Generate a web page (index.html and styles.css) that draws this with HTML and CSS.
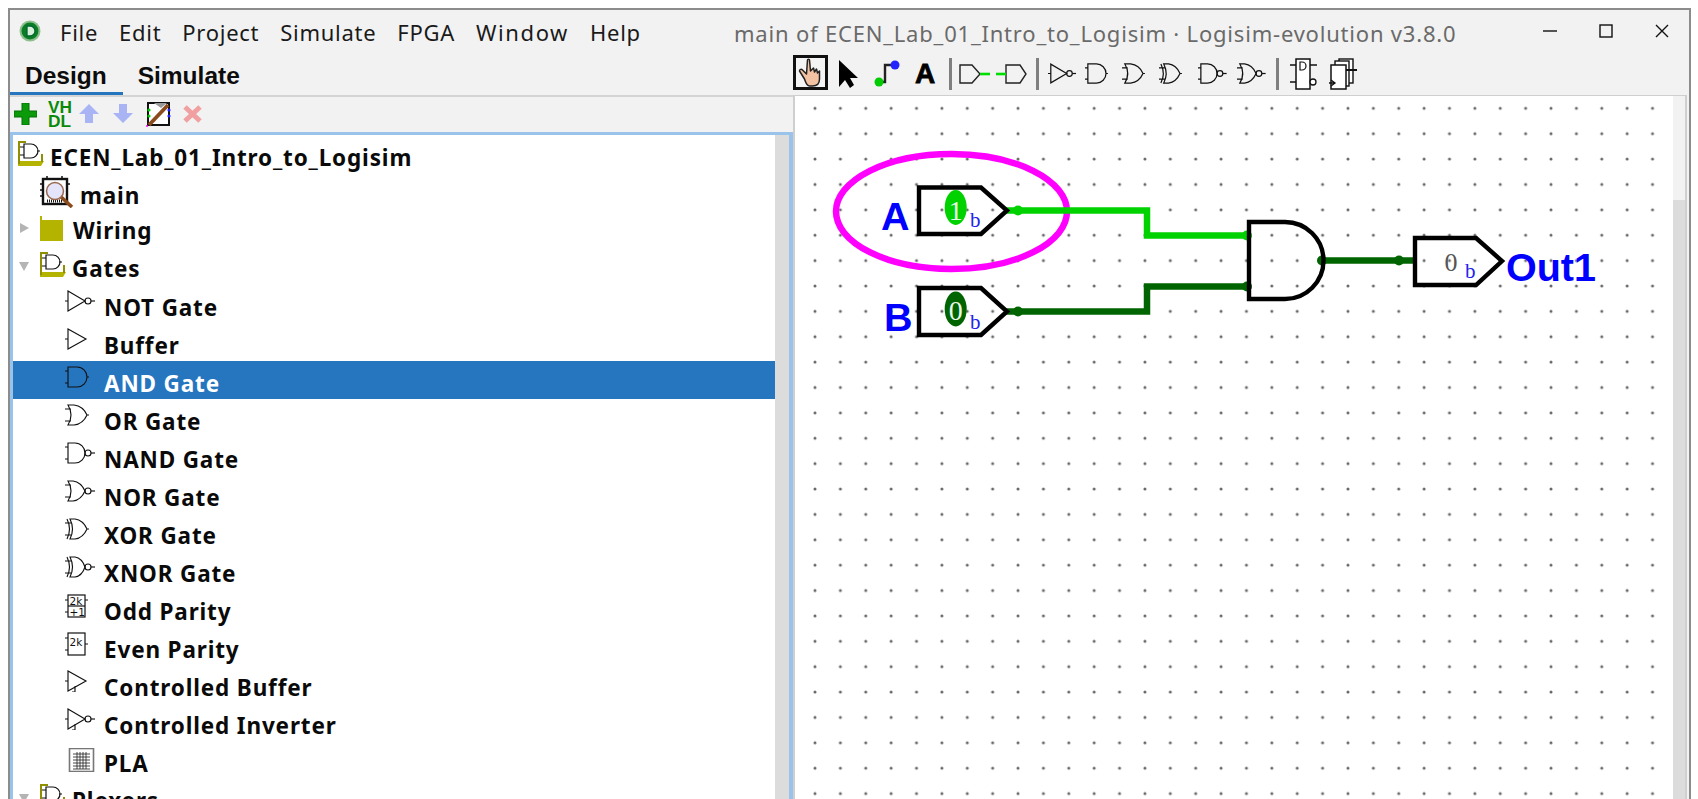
FILE: index.html
```html
<!DOCTYPE html>
<html lang="en">
<head>
<meta charset="utf-8">
<title>main of ECEN_Lab_01_Intro_to_Logisim · Logisim-evolution v3.8.0</title>
<link rel="stylesheet" href="styles.css">
</head>
<body>
<svg class="defs" width="0" height="0" aria-hidden="true">
  <defs>
    <symbol id="g-buf" viewBox="0 0 30 22" preserveAspectRatio="xMinYMid meet"><path d="M0 11H3M3 1V21L21 11Z"/></symbol>
    <symbol id="g-not" viewBox="0 0 30 22" preserveAspectRatio="xMinYMid meet"><path d="M0 11H3M3 1V21L20 11Z"/><circle cx="23" cy="11" r="3"/><path d="M26 11H30"/></symbol>
    <symbol id="g-and" viewBox="0 0 24 22" preserveAspectRatio="xMinYMid meet"><path d="M0 5H3M0 17H3M3 1H12A10 10 0 0 1 12 21H3ZM22 11H24"/></symbol>
    <symbol id="g-or" viewBox="0 0 24 22" preserveAspectRatio="xMinYMid meet"><path d="M0 5H6M0 17H6M3 1H9Q18 2 22 11Q18 20 9 21H3Q9 11 3 1ZM22 11H24"/></symbol>
    <symbol id="g-xor" viewBox="0 0 24 22" preserveAspectRatio="xMinYMid meet"><path d="M0 5H6M0 17H6M5 1H10Q18 2 22 11Q18 20 10 21H5Q10 11 5 1ZM2 1Q7 11 2 21M22 11H24"/></symbol>
    <symbol id="g-nand" viewBox="0 0 30 22" preserveAspectRatio="xMinYMid meet"><path d="M0 5H3M0 17H3M3 1H10A10 10 0 0 1 10 21H3Z"/><circle cx="23" cy="11" r="3"/><path d="M26 11H30"/></symbol>
    <symbol id="g-nor" viewBox="0 0 30 22" preserveAspectRatio="xMinYMid meet"><path d="M0 5H6M0 17H6M3 1H8Q16 2 20 11Q16 20 8 21H3Q9 11 3 1Z"/><circle cx="23" cy="11" r="3"/><path d="M26 11H30"/></symbol>
    <symbol id="g-xnor" viewBox="0 0 30 22" preserveAspectRatio="xMinYMid meet"><path d="M0 5H6M0 17H6M5 1H10Q17 2 20 11Q17 20 10 21H5Q10 11 5 1ZM2 1Q7 11 2 21"/><circle cx="23" cy="11" r="3"/><path d="M26 11H30"/></symbol>
    <symbol id="g-cbuf" viewBox="0 0 30 22" preserveAspectRatio="xMinYMid meet"><path d="M0 11H3M3 1V21L21 11ZM10 16V22H7"/></symbol>
    <symbol id="g-cinv" viewBox="0 0 30 22" preserveAspectRatio="xMinYMid meet"><path d="M0 11H3M3 1V21L20 11ZM10 16V22H7"/><circle cx="23" cy="11" r="3"/><path d="M26 11H30"/></symbol>
    <symbol id="folder-gate" viewBox="0 0 27 26"><path class="olive" d="M1 21H27L24 26H1Z"/><path class="olive-line" d="M2 24V2H9"/><path class="olive-line" d="M25 14V22"/><path class="thin" d="M3 7H7V4H14A6 6 0 0 1 14 18H7V15H3M7 7V15M20 11H23"/></symbol>
  </defs>
</svg>

<div class="window">
  <header class="menubar">
    <svg class="app-logo" viewBox="0 0 22 22"><circle cx="11" cy="11" r="10.5" fill="#8fbf8f"/><circle cx="11" cy="11" r="8.5" fill="#0b7d24"/><path d="M8 6H11A5 5 0 0 1 11 16H8Z" fill="#d8f0d8" stroke="#063" stroke-width="1.3"/></svg>
    <nav class="menu">
      <span>File</span><span>Edit</span><span>Project</span><span>Simulate</span><span>FPGA</span><span class="menu-wide">Window</span><span>Help</span>
    </nav>
    <div class="title">main of ECEN_Lab_01_Intro_to_Logisim · Logisim-evolution v3.8.0</div>
    <div class="controls">
      <svg viewBox="0 0 14 14"><path d="M0 7H14"/></svg>
      <svg viewBox="0 0 14 14"><rect x="1" y="1" width="12" height="12"/></svg>
      <svg viewBox="0 0 14 14"><path d="M1 1L13 13M13 1L1 13"/></svg>
    </div>
  </header>

  <div class="main">
    <aside class="left">
      <div class="tabs">
        <span class="tab active">Design</span>
        <span class="tab">Simulate</span>
      </div>
      <div class="lefttools">
        <svg class="i-plus" viewBox="0 0 23 22"><path d="M8 0H15V8H23V14H15V22H8V14H0V8H8Z" fill="#0a9a0a" stroke="#067006"/></svg>
        <div class="vhdl">VH<br>DL</div>
        <svg class="i-arrow" viewBox="0 0 20 19"><path d="M10 0L20 10H14V19H6V10H0Z" fill="#a8b4f4"/></svg>
        <svg class="i-arrow down" viewBox="0 0 20 19"><path d="M6 0H14V9H20L10 19L0 9H6Z" fill="#a8b4f4"/></svg>
        <svg class="i-edit" viewBox="0 0 25 26">
          <rect x="2" y="2" width="21" height="22" fill="#fff" stroke="#111" stroke-width="2"/>
          <path d="M8 2H21L15 7Z" fill="#999"/>
          <circle cx="3" cy="9" r="1.6" fill="#0c0"/><circle cx="3" cy="15" r="1.6" fill="#0c0"/>
          <circle cx="23" cy="9" r="1.6" fill="#22f"/><circle cx="23" cy="15" r="1.6" fill="#22f"/>
          <path d="M3 24L22 4" stroke="#8a4a1c" stroke-width="3.8"/><circle cx="1" cy="25" r="1" fill="#f0f"/>
        </svg>
        <svg class="i-x" viewBox="0 0 19 18"><path d="M2 2L17 16M17 2L2 16" stroke="#f0a0a0" stroke-width="5"/></svg>
      </div>

      <div class="tree">
        <div class="rows">
          <div class="row root"><svg class="ic-root"><use href="#folder-gate"/></svg><span>ECEN_Lab_01_Intro_to_Logisim</span></div>
          <div class="row sub">
            <svg class="ic-main" viewBox="0 0 34 32">
              <path d="M0 8H4M0 14H4M0 20H4M26 8H30M7 0V4M22 0V4" stroke="#111" stroke-width="1.5"/>
              <rect x="3" y="3" width="24" height="25" fill="#fff" stroke="#111" stroke-width="2.4"/>
              <path d="M7 25H22" stroke="#111" stroke-width="3" stroke-dasharray="1 1"/>
              <path d="M20 20L32 31" stroke="#8a4a1c" stroke-width="3.6"/>
              <circle cx="15" cy="15" r="8.5" fill="#e4e4fa" stroke="#9a6a50" stroke-width="1.5"/>
            </svg>
            <span>main</span>
          </div>
          <div class="row lib"><i class="tri tri-closed"></i><svg class="ic-folder" viewBox="0 0 23 25"><path d="M0 25V0H2V4H23V25Z" fill="#b3b300"/></svg><span>Wiring</span></div>
          <div class="row lib"><i class="tri tri-open"></i><svg class="ic-libg"><use href="#folder-gate"/></svg><span>Gates</span></div>
          <div class="row item"><svg class="gate"><use href="#g-not"/></svg><span>NOT Gate</span></div>
          <div class="row item"><svg class="gate"><use href="#g-buf"/></svg><span>Buffer</span></div>
          <div class="row item selected"><svg class="gate"><use href="#g-and"/></svg><span>AND Gate</span></div>
          <div class="row item"><svg class="gate"><use href="#g-or"/></svg><span>OR Gate</span></div>
          <div class="row item"><svg class="gate"><use href="#g-nand"/></svg><span>NAND Gate</span></div>
          <div class="row item"><svg class="gate"><use href="#g-nor"/></svg><span>NOR Gate</span></div>
          <div class="row item"><svg class="gate"><use href="#g-xor"/></svg><span>XOR Gate</span></div>
          <div class="row item"><svg class="gate"><use href="#g-xnor"/></svg><span>XNOR Gate</span></div>
          <div class="row item">
            <svg class="gate chipbox" viewBox="0 0 30 24"><path class="plain" d="M0 6H3M0 18H3M20 6H23"/><rect class="plain" x="3" y="1" width="17" height="22"/><path class="plain" d="M3 12H20"/><text class="chip" x="4.5" y="10.5">2k</text><text class="chip" x="4.5" y="21.5">+1</text></svg>
            <span>Odd Parity</span>
          </div>
          <div class="row item">
            <svg class="gate chipbox" viewBox="0 0 30 24"><path class="plain" d="M0 6H3M0 18H3M20 12H23"/><rect class="plain" x="3" y="1" width="17" height="22"/><text class="chip" x="4.5" y="14">2k</text></svg>
            <span>Even Parity</span>
          </div>
          <div class="row item"><svg class="gate"><use href="#g-cbuf"/></svg><span>Controlled Buffer</span></div>
          <div class="row item"><svg class="gate"><use href="#g-cinv"/></svg><span>Controlled Inverter</span></div>
          <div class="row item">
            <svg class="gate pla" viewBox="0 0 30 24"><rect x="4.5" y="0.5" width="24" height="23" fill="#fff" stroke="#777" stroke-width="1.6"/><path d="M8 6H25M8 9H25M8 12H25M8 15H25M8 18H25M8 21H25M12 4V21M15 4V21M18 4V21M21 4V21" stroke="#333" stroke-width="0.9" fill="none"/></svg>
            <span>PLA</span>
          </div>
          <div class="row lib"><i class="tri tri-open"></i><svg class="ic-libg"><use href="#folder-gate"/></svg><span>Plexers</span></div>
        </div>
        <div class="tree-scroll"></div>
      </div>
    </aside>

    <section class="right">
      <div class="tools">
        <div class="hand-btn">
          <svg viewBox="0 0 24 30"><path d="M9 2C9 1 11 1 11 2L12 13L15 10L16 14L18 11L19 15L21 13L21 21C21 26 18 28 14 28H11C8 28 7 24 6 21L1 13C1 11 3 11 4 12L8 16Z" fill="#f3c2a2" stroke="#222" stroke-width="1.5" stroke-linejoin="round"/></svg>
        </div>
        <svg class="t-arrow" viewBox="0 0 19 28"><path d="M0 0V27L6 20L11 28L15 25L11 18L19 18Z" fill="#000"/></svg>
        <svg class="t-wire ml-7" viewBox="0 0 26 27"><path d="M5 22H11V5H21" fill="none" stroke="#222" stroke-width="2.4"/><circle cx="5" cy="22" r="4.5" fill="#0c0"/><circle cx="21" cy="5" r="4.5" fill="#22f"/></svg>
        <span class="t-text ml-6">A</span>
        <i class="sep ml-7"></i>
        <svg class="t-gw mln-2" viewBox="0 0 31 20"><path d="M1 1H13L21 10L13 19H1Z" fill="none" stroke="#222" stroke-width="1.4"/><path d="M21 10H31" stroke="#0d0" stroke-width="2.6"/></svg>
        <svg class="t-gw mln-3" viewBox="0 0 31 20"><path d="M10 1H24L30 10L24 19H10Z" fill="none" stroke="#222" stroke-width="1.4"/><path d="M0 10H10" stroke="#0d0" stroke-width="2.6"/></svg>
        <i class="sep"></i>
        <svg class="t-gate"><use href="#g-not"/></svg>
        <svg class="t-gate narrow"><use href="#g-and"/></svg>
        <svg class="t-gate narrow ml-5"><use href="#g-or"/></svg>
        <svg class="t-gate narrow ml-5"><use href="#g-xor"/></svg>
        <svg class="t-gate wide ml-7"><use href="#g-nand"/></svg>
        <svg class="t-gate wide"><use href="#g-nor"/></svg>
        <i class="sep"></i>
        <svg class="t-ff ml-2" viewBox="0 0 28 32"><path d="M0 7H6M20 7H27M0 24H6L10 24M6 21L10 24L6 27" fill="none" stroke="#111" stroke-width="1.5"/><rect x="6" y="1" width="14" height="30" fill="#fff" stroke="#111" stroke-width="1.5"/><path d="M10 4H12A4 4 0 0 1 12 12H10Z" fill="none" stroke="#111" stroke-width="1.2"/><circle cx="23" cy="24" r="3" fill="#fff" stroke="#111" stroke-width="1.3"/></svg>
        <svg class="t-ff ml-2" viewBox="0 0 28 32"><rect x="10" y="1" width="14" height="24" fill="#fff" stroke="#111" stroke-width="1.4"/><rect x="6" y="3" width="14" height="25" fill="#fff" stroke="#111" stroke-width="1.4"/><rect x="2" y="7" width="15" height="24" fill="#fff" stroke="#111" stroke-width="1.5"/><path d="M17 12H28" stroke="#111" stroke-width="2"/><path d="M0 25H6M2 22L6 25L2 28" fill="none" stroke="#111" stroke-width="1.3"/></svg>
      </div>

      <div class="canvas-wrap">
        <svg class="canvas" viewBox="795 96 878 703">
          <defs>
            <pattern id="dots" x="802.31" y="95.61" width="25.38" height="25.38" patternUnits="userSpaceOnUse">
              <circle cx="12.69" cy="12.69" r="1.5" fill="#666"/>
            </pattern>
          </defs>
          <rect x="795" y="96" width="878" height="703" fill="#fff"/>
          <rect x="795" y="96" width="878" height="703" fill="url(#dots)"/>

          <ellipse class="annot" cx="951.5" cy="211.5" rx="115.5" ry="57.5"/>

          <path class="wire on" d="M1006 210.5H1147V235.5H1248"/>
          <circle class="dot-on" cx="1018" cy="210.5" r="5"/>
          <circle class="dot-on" cx="1247" cy="235.5" r="5"/>
          <path class="wire off" d="M1006 311.5H1147V286.5H1248"/>
          <circle class="dot-off" cx="1018" cy="311.5" r="5"/>
          <circle class="dot-off" cx="1247" cy="286.5" r="5"/>
          <path class="wire off" d="M1322 260.5H1415"/>
          <circle class="dot-off" cx="1322" cy="260.5" r="5"/>
          <circle class="dot-off" cx="1399" cy="260.5" r="5"/>

          <path class="part" d="M919 187.5H981L1007 210.5L981 234H919Z"/>
          <path class="part" d="M919 288H981L1007 311.5L981 335H919Z"/>
          <path class="part" d="M1415 238H1476L1502 261L1476 285H1415Z"/>
          <path class="part" d="M1249 222H1285A38.5 38.5 0 0 1 1285 299H1249Z"/>

          <ellipse class="dot-on" cx="955.7" cy="207.5" rx="11" ry="17.5"/>
          <ellipse class="dot-off" cx="955.7" cy="309" rx="11" ry="17.5"/>
          <text class="val light" x="955.7" y="220">1</text>
          <text class="val light" x="955.7" y="320">0</text>
          <text class="val small dark" x="1451" y="271">0</text>
          <text class="radix" x="970" y="227">b</text>
          <text class="radix" x="970" y="329">b</text>
          <text class="radix" x="1465" y="278">b</text>

          <text class="label" x="881" y="229.5">A</text>
          <text class="label" x="884" y="330.5">B</text>
          <text class="label" x="1506" y="281">Out1</text>
        </svg>
        <div class="canvas-scroll"><div class="thumb"></div></div>
      </div>
    </section>
  </div>
</div>
</body>
</html>
```
FILE: styles.css
```css
html, body { margin: 0; padding: 0; height: 100%; background: #fff; overflow: hidden; }
body { padding: 8px 0 0 8px; box-sizing: border-box; }
.defs { position: absolute; }

.window {
  width: 1683px;
  height: 791px;
  box-sizing: border-box;
  border: 2px solid #8c8c8c;
  border-bottom: 0;
  background: #f2f2f2;
  display: flex;
  flex-direction: column;
  overflow: hidden;
  font-family: "Noto Sans", sans-serif;
}

/* title + menu */
.menubar { height: 38px; flex: none; display: flex; align-items: center; position: relative; }
.app-logo { width: 22px; height: 22px; margin: 4px 0 0 9px; flex: none; }
.menu { display: flex; gap: 21px; margin: 6px 0 0 19px; font-size: 22px; letter-spacing: .72px; color: #1a1a1a; }
.menu-wide { letter-spacing: 1.6px; }
.title { position: absolute; left: 724px; top: 8px; font-size: 22px; letter-spacing: .8px; color: #6a6a6a; white-space: nowrap; }
.controls { position: absolute; left: 1533px; top: 14px; display: flex; gap: 42px; }
.controls svg { width: 14px; height: 14px; fill: none; stroke: #111; stroke-width: 1.4; }

.main { flex: 1; display: flex; min-height: 0; }

/* left pane */
.left { width: 783px; flex: none; display: flex; flex-direction: column; }
.tabs { height: 49px; box-sizing: border-box; border-bottom: 2px solid #d4d4d4; display: flex; flex: none; font: bold 24.5px "Liberation Sans", sans-serif; color: #0c0c0c; }
.tab { height: 47px; box-sizing: border-box; padding: 14px 16px 0 15px; }
.tab.active { border-bottom: 3px solid #2675bf; }
.lefttools { height: 35px; box-sizing: border-box; padding: 0 0 2px 4px; flex: none; display: flex; align-items: center; }
.i-plus { width: 23px; height: 22px; }
.vhdl { margin-left: 11px; font: bold 17.3px/14px "Liberation Sans", sans-serif; color: #0a8a0a; width: 24px; }
.i-arrow { width: 20px; height: 19px; margin-left: 7px; }
.i-arrow.down { margin-left: 14px; }
.i-edit { width: 25px; height: 26px; margin-left: 13px; }
.i-x { width: 19px; height: 18px; margin-left: 12px; }

.tree { flex: 1; min-height: 0; display: flex; background: #fff; border: solid #9ac3ec; border-width: 3px 4px 0 3px; overflow: hidden; }
.rows { flex: 1; min-width: 0; }
.tree-scroll { width: 14px; flex: none; background: #dcdcdc; }

.row { height: 38px; display: flex; align-items: center; font: bold 22.5px "Noto Sans", sans-serif; letter-spacing: .85px; color: #0a0a0a; white-space: nowrap; }
.row span { position: relative; top: 3px; }
.row svg { flex: none; }
.root { height: 36px; padding-left: 4px; }
.root span { top: 4px; }
.ic-root { width: 27px; height: 26px; margin-right: 6px; }
.sub { padding-left: 27px; }
.sub span { top: 5px; }
.ic-main { width: 34px; height: 32px; margin: 3px 6px 0 0; }
.lib { padding-left: 6px; }
.lib span { top: 2px; }
.tri { width: 0; height: 0; flex: none; }
.tri-closed { border: 5.5px solid transparent; border-left: 9px solid #b4b4b4; border-right: 0; margin: 0 11px 0 1px; }
.tri-open { border: 5.5px solid transparent; border-top: 9px solid #b4b4b4; border-bottom: 0; margin-right: 10px; }
.ic-folder { width: 23px; height: 25px; margin-right: 10px; }
.ic-libg { width: 27px; height: 26px; margin: -4px 6px 0 0; }
.olive { fill: #b3b300; }
.olive-line { fill: none; stroke: #8f8f00; stroke-width: 2; }
.thin { fill: none; stroke: #111; stroke-width: 1.2; }
.item { padding-left: 52px; }
.gate { width: 30px; height: 22px; margin: -6px 9px 0 0; fill: none; stroke: #111; stroke-width: 1.15; }
.gate.chipbox { height: 24px; margin-top: -5px; }
.gate.pla { height: 24px; margin-top: 0; stroke: none; }
.plain { fill: none; stroke: #111; stroke-width: 1.2; }
.chip { font: 10.5px "DejaVu Sans", sans-serif; fill: #111; stroke: none; letter-spacing: 0; }
.selected { background: #2675bf; color: #fff; }

/* right pane */
.right { flex: 1; min-width: 0; display: flex; flex-direction: column; padding-right: 2px; }
.tools { height: 47px; flex: none; box-sizing: border-box; padding: 8px 0 4px; display: flex; gap: 9px; align-items: center; }
.hand-btn { width: 35px; height: 35px; margin-top: -2px; box-sizing: border-box; border: 3px solid #111; background: #f4f4f4; display: flex; align-items: center; justify-content: center; }
.hand-btn svg { width: 27px; height: 30px; }
.t-arrow { width: 19px; height: 28px; margin-left: 2px; }
.t-wire { width: 26px; height: 27px; }
.t-text { font: 900 28px "Liberation Sans", sans-serif; color: #000; width: 18px; -webkit-text-stroke: .8px #000; text-align: center; line-height: 30px; }
.ml-2 { margin-left: 2px; }
.ml-5 { margin-left: 5px; }
.ml-6 { margin-left: 6px; }
.ml-7 { margin-left: 7px; }
.mln-2 { margin-left: -2px; }
.mln-3 { margin-left: -3px; }
.sep { width: 3px; height: 32px; background: #7f7f7f; flex: none; }
.t-gw { width: 31px; height: 20px; }
.t-gate { width: 28px; height: 21px; fill: none; stroke: #111; stroke-width: 1.3; }
.t-gate.narrow { width: 23px; }
.t-gate.wide { width: 30px; }
.t-ff { width: 28px; height: 32px; }

.canvas-wrap { flex: 1; min-height: 0; display: flex; border: solid #cfcfcf; border-width: 1px 2px 0 2px; }
.canvas { width: 878px; height: 703px; flex: none; display: block; }
.canvas-scroll { width: 12px; flex: none; background: #f2f2f2; padding-top: 104px; box-sizing: border-box; }
.thumb { height: 100%; background: #dcdcdc; }

.annot { fill: none; stroke: #ff00ff; stroke-width: 6.5; }
.wire { fill: none; stroke-width: 6.5; stroke-linejoin: miter; }
.wire.on { stroke: #00d200; }
.wire.off { stroke: #006400; }
.dot-on { fill: #00d200; }
.dot-off { fill: #006400; }
.part { fill: none; stroke: #000; stroke-width: 4.4; }
.val { font: 28px "Liberation Serif", serif; text-anchor: middle; }
.val.small { font-size: 26px; }
.val.light { fill: #e8f8e8; }
.val.dark { fill: #555; }
.radix { font: 21px "Liberation Serif", serif; fill: #2222ee; }
.label { font: bold 39.5px "Liberation Sans", sans-serif; fill: #0000ff; }
```
